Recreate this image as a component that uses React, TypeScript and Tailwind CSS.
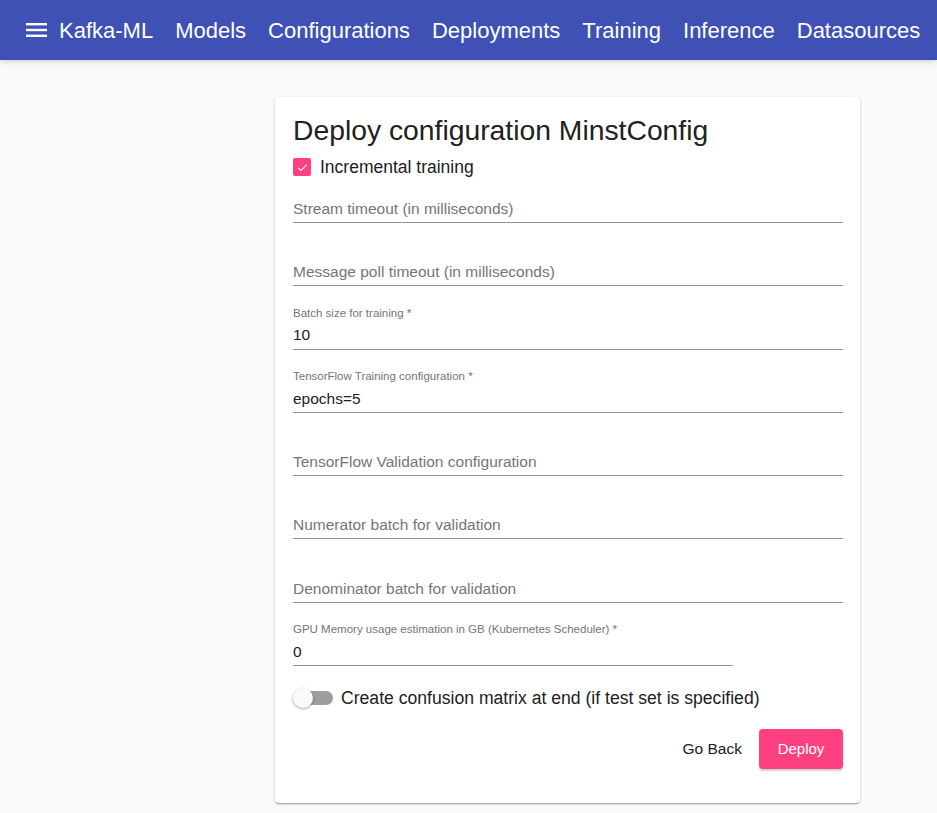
import React from 'react';

const navItems = ['Models', 'Configurations', 'Deployments', 'Training', 'Inference', 'Datasources'];

interface FieldProps {
  label: string;
  value?: string;
  wide?: boolean;
}

const Field: React.FC<FieldProps> = ({ label, value, wide = true }) => {
  const filled = value !== undefined;
  return (
    <div className={`flex flex-col ${wide ? 'w-full' : 'w-[440px]'}`}>
      <div className="h-[16px] flex items-center text-[11.5px] text-[#757575] leading-none whitespace-nowrap">
        {filled ? label : ''}
      </div>
      <div className="h-[28px] flex items-center border-b border-[#949494]">
        {filled ? (
          <span className="text-[15.5px] text-[#212121]">{value}</span>
        ) : (
          <span className="text-[15.5px] text-[#757575]">{label}</span>
        )}
      </div>
    </div>
  );
};

export default function App() {
  return (
    <div className="min-h-screen bg-[#fafafa]" style={{ fontFamily: '"Liberation Sans", Arial, sans-serif' }}>
      <header className="h-[60px] bg-[#3f51b5] flex items-center pl-[26px] text-white shadow-md">
        <svg width="21" height="16" viewBox="0 0 21 16" className="mr-[12px]">
          <rect x="0" y="1" width="21" height="2.4" fill="white" />
          <rect x="0" y="6.8" width="21" height="2.4" fill="white" />
          <rect x="0" y="12.6" width="21" height="2.4" fill="white" />
        </svg>
        <nav className="flex items-center gap-[22px] text-[22px] whitespace-nowrap">
          <span>Kafka-ML</span>
          {navItems.map((item) => (
            <span key={item}>{item}</span>
          ))}
        </nav>
      </header>

      <main className="flex pt-[37px] pl-[275px]">
        <div className="w-[585px] bg-white rounded-[4px] shadow-[0_1px_3px_rgba(0,0,0,0.2),0_1px_1px_rgba(0,0,0,0.14),0_2px_1px_-1px_rgba(0,0,0,0.12)] pl-[18px] pr-[17px] pt-[17px] pb-[34px]">
          <h1 className="h-[32px] flex items-center text-[28.3px] text-[#212121] whitespace-nowrap">
            Deploy configuration MinstConfig
          </h1>

          <label className="mt-[9px] h-[24px] flex items-center gap-[9px]">
            <span className="w-[18px] h-[18px] rounded-[2px] bg-[#ff4081] flex items-center justify-center">
              <svg width="13" height="13" viewBox="0 0 24 24" fill="none" stroke="white" strokeWidth="2">
                <path d="M4 12.5l5 5L20 6.5" />
              </svg>
            </span>
            <span className="text-[17.5px] text-[#212121]">Incremental training</span>
          </label>

          <div className="flex flex-col gap-[19.3px]">
            <Field label="Stream timeout (in milliseconds)" />
            <Field label="Message poll timeout (in milliseconds)" />
            <Field label="Batch size for training *" value="10" />
            <Field label="TensorFlow Training configuration *" value="epochs=5" />
            <Field label="TensorFlow Validation configuration" />
            <Field label="Numerator batch for validation" />
            <Field label="Denominator batch for validation" />
            <Field label="GPU Memory usage estimation in GB (Kubernetes Scheduler) *" value="0" wide={false} />
          </div>

          <div className="mt-[18px] h-[28px] flex items-center">
            <div className="relative w-[40px] h-[20px] mr-[8px]">
              <div className="absolute left-[4px] top-[3px] w-[36px] h-[14px] rounded-full bg-[#9e9e9e]" />
              <div className="absolute left-0 top-0 w-[20px] h-[20px] rounded-full bg-[#fafafa] shadow-[0_1px_3px_rgba(0,0,0,0.35)]" />
            </div>
            <span className="text-[17.6px] text-[#212121] whitespace-nowrap">
              Create confusion matrix at end (if test set is specified)
            </span>
          </div>

          <div className="mt-[17px] flex justify-end items-center gap-[9px]">
            <button type="button" className="h-[40px] px-[8px] text-[15.5px] text-[#212121]">
              Go Back
            </button>
            <button
              type="button"
              className="h-[40px] w-[84px] rounded-[4px] bg-[#ff4081] text-white text-[15px] shadow-[0_2px_2px_rgba(0,0,0,0.2)]"
            >
              Deploy
            </button>
          </div>
        </div>
      </main>
    </div>
  );
}
